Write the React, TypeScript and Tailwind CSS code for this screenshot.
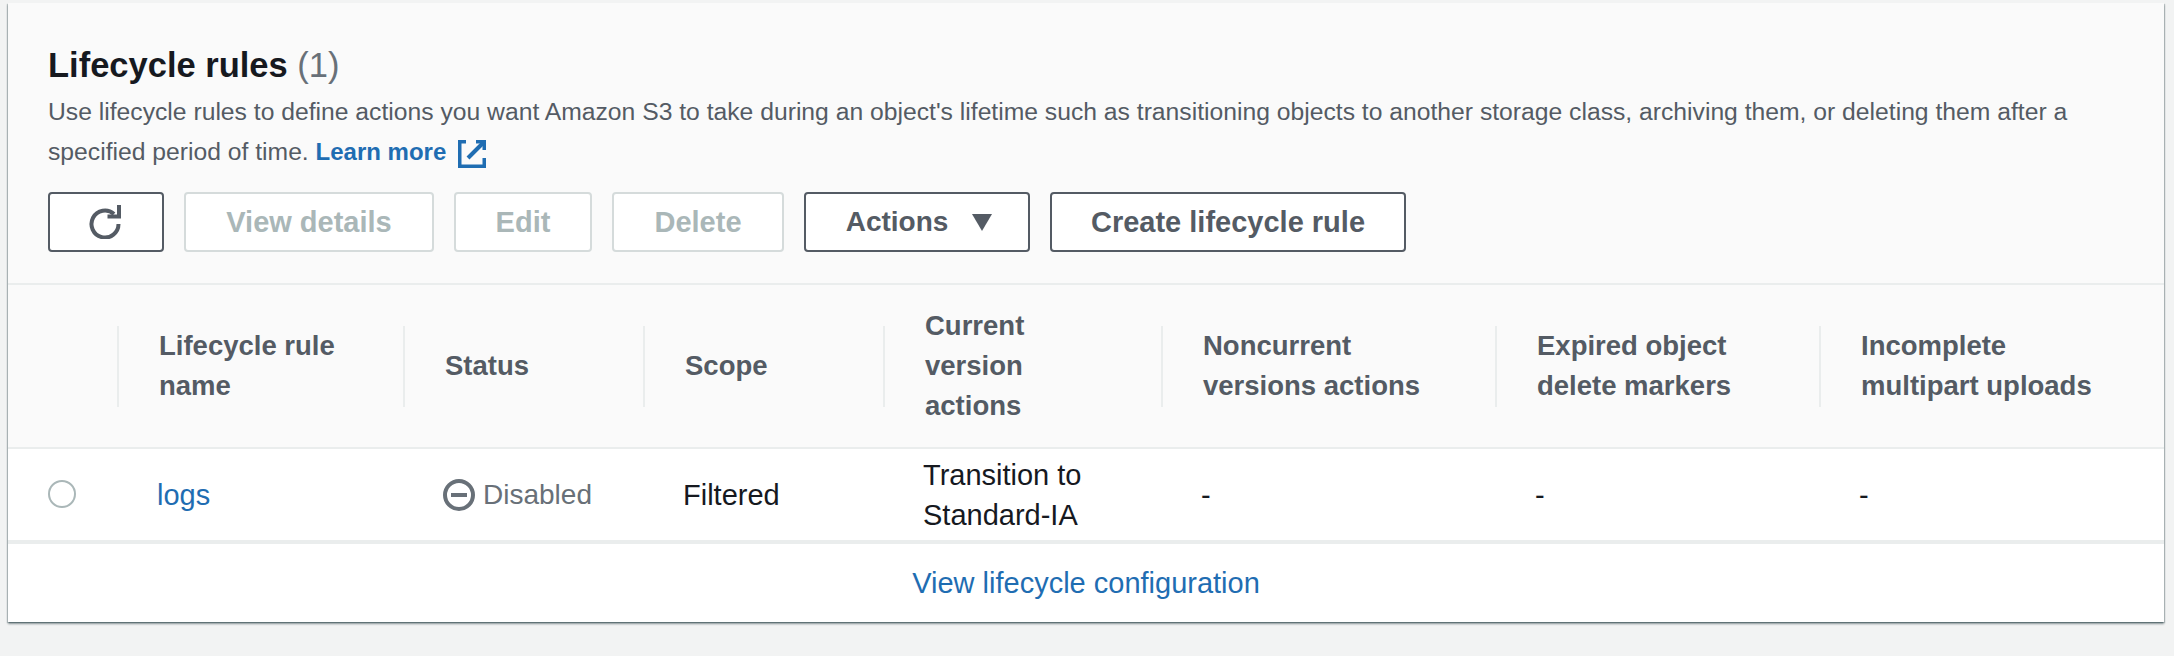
import { ReactNode } from 'react';

// Column tracks of the rules table, radio column first
const GRID = 'grid grid-cols-[109px_286px_240px_240px_278px_334px_324px_345px]';

const COLUMNS = [
  ['Lifecycle rule', 'name'],
  ['Status'],
  ['Scope'],
  ['Current', 'version', 'actions'],
  ['Noncurrent', 'versions actions'],
  ['Expired object', 'delete markers'],
  ['Incomplete', 'multipart uploads'],
];

function Button({ children, disabled, className }: { children: ReactNode; disabled?: boolean; className: string }) {
  return (
    <button
      disabled={disabled}
      className={`flex h-[60px] items-center justify-center rounded-[4px] border-2 bg-white text-[29px] font-bold ${
        disabled ? 'border-[#d5dbdb] text-[#aab7b8]' : 'border-[#545b64] text-[#545b64]'
      } ${className}`}
    >
      {children}
    </button>
  );
}

function RefreshIcon() {
  return (
    <svg width="34" height="34" viewBox="0 0 34 34" fill="none" stroke="#545b64" strokeWidth="4">
      <path d="M29.5 19a13.5 13.5 0 1 1-4.5-10" />
      <path d="M30 0v11.5h-11.5" />
    </svg>
  );
}

function ExternalIcon() {
  return (
    <svg width="28" height="28" viewBox="0 0 28 28" fill="none" stroke="#1f6db2" className="ml-3 inline-block align-middle">
      <path d="M8 1.75H1.75v24.5h24.5V18" strokeWidth="3.5" />
      <path d="M18 1.75h8.25V10" strokeWidth="3.5" />
      <path d="M25 3L10 18" strokeWidth="4" />
    </svg>
  );
}

function DisabledIcon() {
  return (
    <svg width="32" height="32" viewBox="0 0 32 32" fill="none" stroke="#687078">
      <circle cx="16" cy="16" r="14" strokeWidth="4" />
      <path d="M8 16h16" strokeWidth="4" />
    </svg>
  );
}

export default function App() {
  return (
    <div className="min-h-[656px] bg-[#f2f3f3] pt-[3px] pl-2 pr-[10px] font-['Liberation_Sans',sans-serif] text-[29px] leading-[40px]">
      <div className="w-[2156px] bg-white shadow-[0_2px_2px_0_rgba(0,28,36,0.4),1px_1px_1px_0_rgba(0,28,36,0.2),-1px_1px_1px_0_rgba(0,28,36,0.2)]">
        {/* Header */}
        <div className="h-[282px] border-b-2 border-[#eaeded] bg-[#fafafa] px-10 pt-10">
          <h1 className="text-[34.5px] font-bold leading-[44px] text-[#16191f]">
            Lifecycle rules <span className="font-normal text-[#687078]">(1)</span>
          </h1>
          <p className="mt-[5px] text-[24.7px] text-[#545b64]">
            Use lifecycle rules to define actions you want Amazon S3 to take during an object's lifetime such as
            transitioning objects to another storage class, archiving them, or deleting them after a specified period
            of time.{' '}
            <a className="text-[24px] font-bold text-[#1f6db2]">
              Learn more
              <ExternalIcon />
            </a>
          </p>
          <div className="mt-5 flex gap-5">
            <Button className="w-[116px]">
              <RefreshIcon />
            </Button>
            <Button disabled className="w-[250px]">View details</Button>
            <Button disabled className="w-[138px]">Edit</Button>
            <Button disabled className="w-[172px]">Delete</Button>
            <Button className="w-[226px] pl-1 !text-[28px]">
              Actions
              <svg width="20" height="17" viewBox="0 0 20 17" fill="#545b64" className="ml-6">
                <path d="M0 0h20L10 17z" />
              </svg>
            </Button>
            <Button className="w-[356px]">Create lifecycle rule</Button>
          </div>
        </div>

        {/* Table head */}
        <div className={`${GRID} h-[164px] items-center border-b-2 border-[#eaeded] bg-[#fafafa] text-[27.5px] font-bold text-[#545b64]`}>
          <div />
          {COLUMNS.map((lines) => (
            <div key={lines[0]} className="flex h-[81px] items-center whitespace-nowrap border-l-2 border-[#eaeded] pl-10">
              <div>
                {lines.map((line) => (
                  <div key={line}>{line}</div>
                ))}
              </div>
            </div>
          ))}
        </div>

        {/* Row */}
        <div className={`${GRID} h-[95px] items-center border-b-4 border-[#eaeded] text-[#16191f]`}>
          <div className="pl-10">
            <div className="mb-[2px] h-7 w-7 rounded-full border-2 border-[#aab7b8] bg-white" />
          </div>
          <div className="pl-10">
            <a className="text-[#1f6db2]">logs</a>
          </div>
          <div className="flex items-center gap-2 pl-10 text-[28px] text-[#687078]">
            <DisabledIcon />
            <span>Disabled</span>
          </div>
          <div className="pl-10">Filtered</div>
          <div className="pl-10 pr-6">Transition to Standard-IA</div>
          <div className="pl-10">-</div>
          <div className="pl-10">-</div>
          <div className="pl-10">-</div>
        </div>

        {/* Footer */}
        <div className="flex h-[78px] items-center justify-center">
          <a className="text-[#1f6db2]">View lifecycle configuration</a>
        </div>
      </div>
    </div>
  );
}
